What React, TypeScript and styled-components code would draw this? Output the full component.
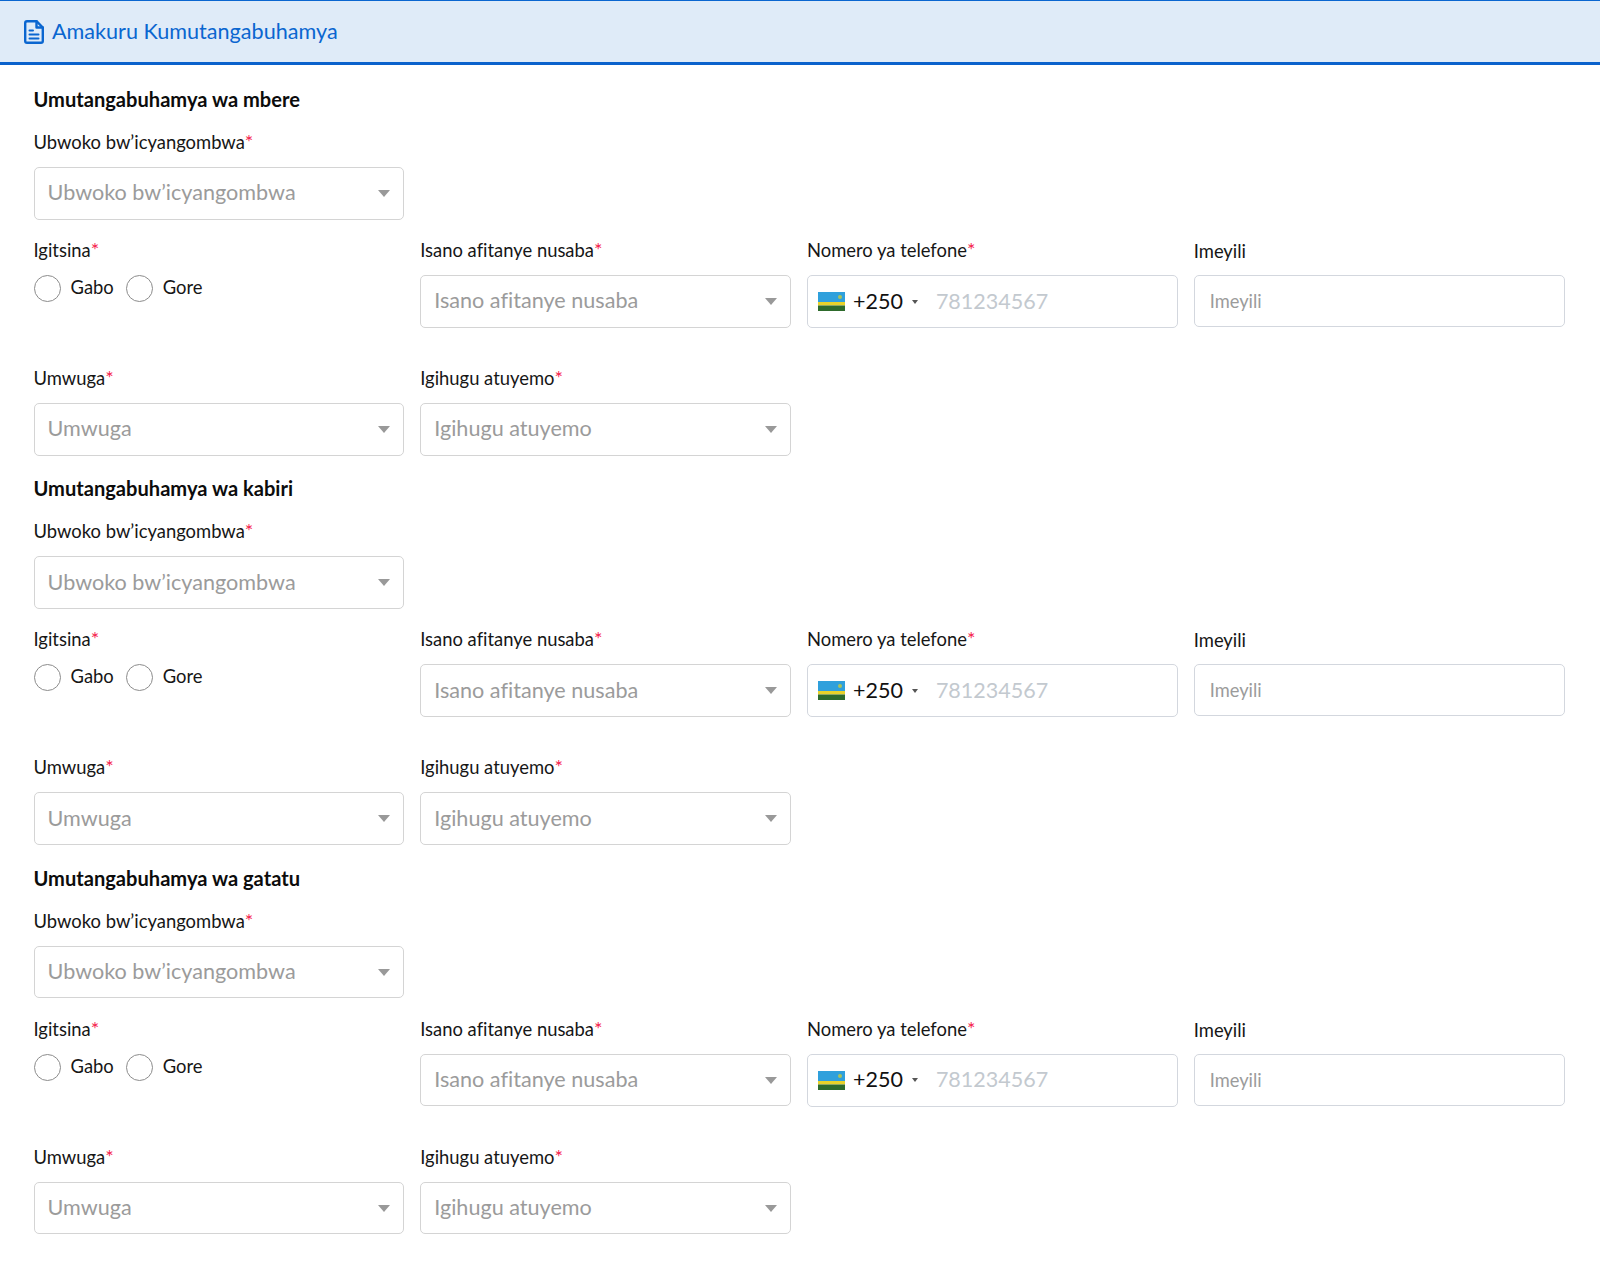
import React from 'react';
import styled, { createGlobalStyle } from 'styled-components';

const GlobalStyle = createGlobalStyle`
  html, body {
    margin: 0;
    padding: 0;
    background: #fff;
    font-family: "Lato", "Noto Sans", sans-serif;
    font-variant-ligatures: none;
    color: #111;
  }
`;

const Page = styled.div`
  width: 1600px;
  height: 1284px;
  overflow: hidden;
`;

const Header = styled.header`
  height: 61px;
  display: flex;
  align-items: center;
  gap: 8px;
  padding-left: 24px;
  background: #dfebf8;
  border-top: 1px solid #0a66d0;
  border-bottom: 3px solid #0a62cc;
  color: #0a66d0;
  font-size: 21.6px;
`;

const HeaderText = styled.span`
  padding-bottom: 2px;
`;

const Body = styled.main`
  padding: 23px 35.5px 0 33.5px;
`;

const Witness = styled.section`
  margin-bottom: 21.4px;
`;

const WitnessTitle = styled.h3`
  margin: 0 0 19px;
  height: 24px;
  line-height: 22px;
  font-size: 20.1px;
  font-weight: 700;
  color: #0c0c0c;
`;

const Grid = styled.div`
  display: grid;
  grid-template-columns: repeat(4, 1fr);
  column-gap: 16px;
`;

const Field = styled.div<{ $height: number }>`
  height: ${(p) => p.$height}px;
`;

const Label = styled.label<{ $low?: boolean }>`
  display: block;
  height: 24px;
  margin-bottom: 12px;
  line-height: ${(p) => (p.$low ? 24 : 22)}px;
  font-size: 18.4px;
  color: #161616;
`;

const Star = styled.span`
  color: #f5224d;
  font-size: 20px;
  line-height: 0;
`;

const SelectBox = styled.div`
  box-sizing: border-box;
  height: 52.5px;
  display: flex;
  align-items: center;
  justify-content: space-between;
  padding: 0 13px 2px 13px;
  border: 1px solid #d4d4d4;
  border-radius: 5px;
  font-size: 21.6px;
  color: #9b9b9b;
`;

const Caret = styled.span`
  width: 0;
  height: 0;
  margin-top: 2px;
  border-left: 6.5px solid transparent;
  border-right: 6.5px solid transparent;
  border-top: 7px solid #999;
`;

const RadioRow = styled.div`
  display: flex;
  align-items: center;
  height: 27px;
`;

const RadioCircle = styled.span`
  box-sizing: border-box;
  width: 27px;
  height: 27px;
  border: 1px solid #8c8c8c;
  border-radius: 50%;
  margin-right: 10px;
`;

const RadioText = styled.span`
  padding-bottom: 3px;
  font-size: 18.4px;
  color: #161616;
  margin-right: 12px;
`;

const PhoneBox = styled.div`
  box-sizing: border-box;
  height: 53px;
  display: flex;
  align-items: center;
  padding-left: 10px;
  border: 1px solid #d3d7de;
  border-radius: 5px;
`;

const Dial = styled.span`
  margin-left: 8px;
  padding-bottom: 2px;
  font-size: 21.5px;
  color: #111;
`;

const DialCaret = styled.span`
  margin-left: 9px;
  width: 0;
  height: 0;
  border-left: 3px solid transparent;
  border-right: 3px solid transparent;
  border-top: 4px solid #555;
`;

const PhoneHint = styled.span`
  margin-left: 18px;
  padding-bottom: 2px;
  font-size: 21.5px;
  color: #c3c9cf;
`;

const TextBox = styled.div`
  box-sizing: border-box;
  height: 52px;
  margin-top: 1px;
  display: flex;
  align-items: center;
  padding: 0 0 0 15px;
  border: 1px solid #d3d7de;
  border-radius: 5px;
  font-size: 18.3px;
  color: #9b9b9b;
`;

const Select = ({ text }: { text: string }) => (
  <SelectBox>
    {text}
    <Caret />
  </SelectBox>
);

const Req = ({ text }: { text: string }) => (
  <Label>
    {text}
    <Star>*</Star>
  </Label>
);

const DocIcon = () => (
  <svg width="20" height="24" viewBox="0 0 20 24" fill="none" stroke="#0a66d0" strokeWidth="2.400" strokeLinejoin="round" strokeLinecap="round">
    <path d="M3 1.200h9.500L18.800 7.500V21a1.800 1.800 0 0 1-1.800 1.800H3A1.800 1.800 0 0 1 1.200 21V3A1.800 1.800 0 0 1 3 1.200z" />
    <path d="M12.500 1.200v6.300h6.300" />
    <path strokeWidth="2" d="M5.500 10.500h3.500M5.500 14.500h9M5.500 18.500h9" />
  </svg>
);

const RwandaFlag = () => (
  <svg width="27" height="19" viewBox="0 0 27 19">
    <rect width="27" height="10" fill="#2fa0dc" />
    <rect y="10" width="27" height="3.500" fill="#e8d22a" />
    <rect y="13.500" width="27" height="5.500" fill="#2e6b2c" />
    <circle cx="22" cy="5" r="2" fill="#a9c25a" />
  </svg>
);

const titles = ['Umutangabuhamya wa mbere', 'Umutangabuhamya wa kabiri', 'Umutangabuhamya wa gatatu'];

const WitnessForm = ({ title }: { title: string }) => (
  <Witness>
    <WitnessTitle>{title}</WitnessTitle>
    <Grid>
      <Field $height={108}>
        <Req text="Ubwoko bw’icyangombwa" />
        <Select text="Ubwoko bw’icyangombwa" />
      </Field>
    </Grid>
    <Grid>
      <Field $height={128}>
        <Req text="Igitsina" />
        <RadioRow>
          <RadioCircle />
          <RadioText>Gabo</RadioText>
          <RadioCircle />
          <RadioText>Gore</RadioText>
        </RadioRow>
      </Field>
      <Field $height={128}>
        <Req text="Isano afitanye nusaba" />
        <Select text="Isano afitanye nusaba" />
      </Field>
      <Field $height={128}>
        <Req text="Nomero ya telefone" />
        <PhoneBox>
          <RwandaFlag />
          <Dial>+250</Dial>
          <DialCaret />
          <PhoneHint>781234567</PhoneHint>
        </PhoneBox>
      </Field>
      <Field $height={128}>
        <Label $low>Imeyili</Label>
        <TextBox>Imeyili</TextBox>
      </Field>
    </Grid>
    <Grid>
      <Field $height={89}>
        <Req text="Umwuga" />
        <Select text="Umwuga" />
      </Field>
      <Field $height={89}>
        <Req text="Igihugu atuyemo" />
        <Select text="Igihugu atuyemo" />
      </Field>
    </Grid>
  </Witness>
);

const App: React.FC = () => (
  <>
    <GlobalStyle />
    <Page>
      <Header>
        <DocIcon />
        <HeaderText>Amakuru Kumutangabuhamya</HeaderText>
      </Header>
      <Body>
        {titles.map((t) => (
          <WitnessForm key={t} title={t} />
        ))}
      </Body>
    </Page>
  </>
);

export default App;
